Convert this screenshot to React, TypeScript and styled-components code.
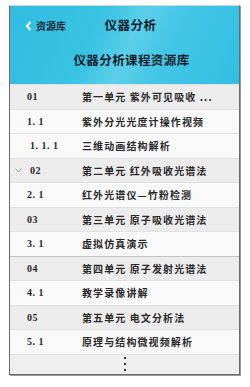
import { createGlobalStyle, styled } from "styled-components";

const GlobalStyle = createGlobalStyle`
  html, body {
    margin: 0;
    padding: 0;
    background: #ffffff;
  }
`;

const Page = styled.div`
  padding: 5px 10px 10px 9px;
  font-family: "Noto Sans CJK SC", "Liberation Sans", sans-serif;
`;

const Phone = styled.div`
  display: flex;
  flex-direction: column;
  border: 1px solid #6b6b6b;
  border-top-color: #c9d7dc;
  box-shadow: 1px 1px 0 #9a9a9a;
  background: #f3f3f3;
`;

const Header = styled.header`
  display: flex;
  flex-direction: column;
  height: 78px;
  background: linear-gradient(
    115deg,
    #2fbde0 0%,
    #3ac3e3 38%,
    #5ccfea 52%,
    #44c6e5 66%,
    #31bfe2 100%
  );
`;

const NavBar = styled.div`
  position: relative;
  display: flex;
  align-items: center;
  justify-content: center;
  height: 37px;
`;

const Back = styled.div`
  position: absolute;
  left: 15px;
  top: 12px;
  display: flex;
  align-items: center;
  gap: 4px;
  font-size: 10px;
  font-weight: 700;
  color: #1b2a33;
`;

const NavTitle = styled.h1`
  margin: 0 0 0 12px;
  font-size: 12.5px;
  font-weight: 700;
  color: #14202a;
  letter-spacing: 0.5px;
`;

const CourseTitle = styled.h2`
  margin: 0;
  flex: 1;
  display: flex;
  align-items: center;
  justify-content: center;
  padding: 0 0 8px 14px;
  font-size: 12.5px;
  font-weight: 700;
  color: #14202a;
  letter-spacing: 0.4px;
`;

const List = styled.ul`
  list-style: none;
  margin: 0;
  padding: 0;
`;

const Row = styled.li<{ $unit: boolean; $strong?: boolean }>`
  position: relative;
  display: grid;
  grid-template-columns: 55px 1fr;
  align-items: center;
  height: 24.5px;
  padding-left: 17px;
  background: ${(p) => (p.$unit ? "#ececec" : "#f9f9f9")};
  border-top: 1px solid ${(p) => (p.$strong ? "#c4c4c4" : "#e2e2e2")};
  box-sizing: border-box;
`;

const Num = styled.span`
  font-family: "Liberation Serif", "DejaVu Serif", serif;
  font-size: 10px;
  font-weight: 700;
  color: #2a2a2a;
  letter-spacing: 0.5px;
`;

const Label = styled.span`
  font-size: 10px;
  font-weight: 700;
  color: #2a2a2a;
  letter-spacing: 1.1px;
  white-space: nowrap;
`;

const Chevron = styled.svg`
  position: absolute;
  left: 5px;
  top: 9px;
`;

const MoreRow = styled.li`
  display: flex;
  flex-direction: column;
  align-items: center;
  justify-content: center;
  gap: 4px;
  height: 19px;
  background: #efefef;
  border-top: 1px solid #e2e2e2;
`;

const Dot = styled.span`
  width: 2px;
  height: 2px;
  background: #333;
`;

type Item = {
  num: string;
  label: string;
  unit?: boolean;
  open?: boolean;
  strong?: boolean;
  indent?: number;
};

const items: Item[] = [
  { num: "01", label: "第一单元 紫外可见吸收 ...", unit: true },
  { num: "1.1", label: "紫外分光光度计操作视频" },
  { num: "1.1.1", label: "三维动画结构解析", indent: 3 },
  { num: "02", label: "第二单元 红外吸收光谱法", unit: true, open: true, indent: 3 },
  { num: "2.1", label: "红外光谱仪—竹粉检测" },
  { num: "03", label: "第三单元 原子吸收光谱法", unit: true },
  { num: "3.1", label: "虚拟仿真演示" },
  { num: "04", label: "第四单元 原子发射光谱法", unit: true, strong: true },
  { num: "4.1", label: "教学录像讲解" },
  { num: "05", label: "第五单元 电文分析法", unit: true },
  { num: "5.1", label: "原理与结构微视频解析" },
];

export default function App() {
  return (
    <Page>
      <GlobalStyle />
      <Phone>
        <Header>
          <NavBar>
            <Back>
              <svg width="7" height="10" viewBox="0 0 7 10">
                <path
                  d="M5.5 1 L1.8 5 L5.5 9"
                  fill="none"
                  stroke="#ffffff"
                  strokeWidth="2"
                />
              </svg>
              资源库
            </Back>
            <NavTitle>仪器分析</NavTitle>
          </NavBar>
          <CourseTitle>仪器分析课程资源库</CourseTitle>
        </Header>
        <List>
          {items.map((it) => (
            <Row key={it.num} $unit={!!it.unit} $strong={it.strong}>
              {it.open && (
                <Chevron width="7" height="5" viewBox="0 0 7 5">
                  <path d="M0.5 0.5 L3.5 4 L6.5 0.5" fill="none" stroke="#9a9a9a" strokeWidth="0.9" />
                </Chevron>
              )}
              <Num style={it.indent ? { paddingLeft: it.indent } : undefined}>
                {it.num.split(".").join(". ")}
              </Num>
              <Label>{it.label}</Label>
            </Row>
          ))}
          <MoreRow>
            <Dot />
            <Dot />
            <Dot />
          </MoreRow>
        </List>
      </Phone>
    </Page>
  );
}
